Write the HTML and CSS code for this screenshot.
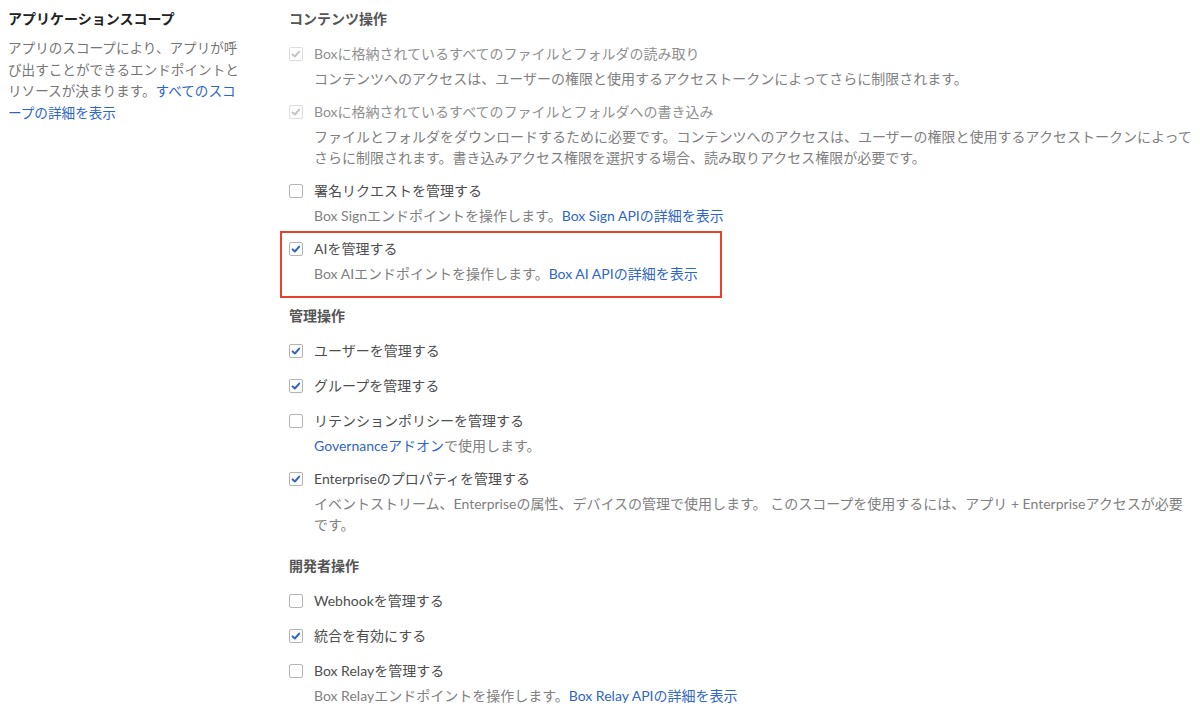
FILE: index.html
```html
<!DOCTYPE html>
<html lang="ja">
<head>
  <meta charset="UTF-8" />
  <title>アプリケーションスコープ</title>
  <link rel="stylesheet" href="styles.css">
</head>
<body>
  <div class="scopes">
    <div class="scopes-intro">
      <h2 class="intro-title">アプリケーションスコープ</h2>
      <p class="intro-text">アプリのスコープにより、アプリが呼び出すことができるエンドポイントとリソースが決まります。<a href="#">すべてのスコープの詳細を表示</a></p>
    </div>

    <div class="scopes-list">
      <!-- コンテンツ操作 -->
      <section class="group">
        <h3 class="group-title">コンテンツ操作</h3>
        <div class="item is-disabled">
          <label class="item-label">
            <span class="box checked">
              <svg viewBox="0 0 12 12"><path d="M2.6 6.4 L4.9 8.5 L9.2 3.6" /></svg>
            </span>
            Boxに格納されているすべてのファイルとフォルダの読み取り
          </label>
          <p class="item-desc">コンテンツへのアクセスは、ユーザーの権限と使用するアクセストークンによってさらに制限されます。</p>
        </div>
        <div class="item is-disabled">
          <label class="item-label">
            <span class="box checked">
              <svg viewBox="0 0 12 12"><path d="M2.6 6.4 L4.9 8.5 L9.2 3.6" /></svg>
            </span>
            Boxに格納されているすべてのファイルとフォルダへの書き込み
          </label>
          <p class="item-desc">ファイルとフォルダをダウンロードするために必要です。コンテンツへのアクセスは、ユーザーの権限と使用するアクセストークンによってさらに制限されます。書き込みアクセス権限を選択する場合、読み取りアクセス権限が必要です。</p>
        </div>
        <div class="item">
          <label class="item-label">
            <span class="box"></span>
            署名リクエストを管理する
          </label>
          <p class="item-desc">Box Signエンドポイントを操作します。<a href="#">Box Sign APIの詳細を表示</a></p>
        </div>
        <div class="item is-highlighted">
          <label class="item-label">
            <span class="box checked">
              <svg viewBox="0 0 12 12"><path d="M2.6 6.4 L4.9 8.5 L9.2 3.6" /></svg>
            </span>
            AIを管理する
          </label>
          <p class="item-desc">Box AIエンドポイントを操作します。<a href="#">Box AI APIの詳細を表示</a></p>
        </div>
      </section>

      <!-- 管理操作 -->
      <section class="group">
        <h3 class="group-title">管理操作</h3>
        <div class="item">
          <label class="item-label">
            <span class="box checked">
              <svg viewBox="0 0 12 12"><path d="M2.6 6.4 L4.9 8.5 L9.2 3.6" /></svg>
            </span>
            ユーザーを管理する
          </label>
        </div>
        <div class="item">
          <label class="item-label">
            <span class="box checked">
              <svg viewBox="0 0 12 12"><path d="M2.6 6.4 L4.9 8.5 L9.2 3.6" /></svg>
            </span>
            グループを管理する
          </label>
        </div>
        <div class="item">
          <label class="item-label">
            <span class="box"></span>
            リテンションポリシーを管理する
          </label>
          <p class="item-desc"><a href="#">Governanceアドオン</a>で使用します。</p>
        </div>
        <div class="item">
          <label class="item-label">
            <span class="box checked">
              <svg viewBox="0 0 12 12"><path d="M2.6 6.4 L4.9 8.5 L9.2 3.6" /></svg>
            </span>
            Enterpriseのプロパティを管理する
          </label>
          <p class="item-desc">イベントストリーム、Enterpriseの属性、デバイスの管理で使用します。 このスコープを使用するには、アプリ + Enterpriseアクセスが必要です。</p>
        </div>
      </section>

      <!-- 開発者操作 -->
      <section class="group">
        <h3 class="group-title">開発者操作</h3>
        <div class="item">
          <label class="item-label">
            <span class="box"></span>
            Webhookを管理する
          </label>
        </div>
        <div class="item">
          <label class="item-label">
            <span class="box checked">
              <svg viewBox="0 0 12 12"><path d="M2.6 6.4 L4.9 8.5 L9.2 3.6" /></svg>
            </span>
            統合を有効にする
          </label>
        </div>
        <div class="item">
          <label class="item-label">
            <span class="box"></span>
            Box Relayを管理する
          </label>
          <p class="item-desc">Box Relayエンドポイントを操作します。<a href="#">Box Relay APIの詳細を表示</a></p>
        </div>
      </section>
    </div>
  </div>
</body>
</html>
```

FILE: styles.css
```css
body {
  margin: 0;
  font-family: Lato, "Noto Sans CJK JP", sans-serif;
  font-size: 14px;
  color: #4e4e4e;
  background-color: #fff;
}
a {
  color: #2f66c6;
  text-decoration: none;
}
.scopes {
  display: grid;
  grid-template-columns: 240px 1fr;
  column-gap: 41px;
  padding: 8px;
}
.intro-title {
  margin: 0 0 9px;
  font-size: 14px;
  line-height: 21px;
  font-weight: bold;
  color: #222;
}
.intro-text {
  margin: 0;
  font-size: 13.6px;
  line-height: 21.5px;
  color: #767676;
}
.scopes-list {
  display: flex;
  flex-direction: column;
  gap: 20px;
}
.group {
  display: flex;
  flex-direction: column;
  gap: 11px;
}
.group-title {
  margin: 0 0 2px;
  font-size: 14px;
  line-height: 21px;
  font-weight: bold;
  color: #555;
}
.item-label {
  display: flex;
  align-items: center;
  gap: 11px;
  line-height: 24px;
  color: #4e4e4e;
  cursor: pointer;
}
.item-desc {
  margin: 2px 0 0;
  padding-left: 25px;
  line-height: 21px;
  color: #808080;
}
.box {
  flex: none;
  width: 14px;
  height: 14px;
  box-sizing: border-box;
  border: 1px solid #b3b3b3;
  border-radius: 2px;
  background-color: #fff;
  display: flex;
}
.box svg {
  width: 12px;
  height: 12px;
  fill: none;
  stroke: #2f66c6;
  stroke-width: 2;
  stroke-linecap: round;
  stroke-linejoin: round;
}
.is-disabled .item-label {
  color: #8f8f8f;
}
.is-disabled .box {
  border-color: #dcdcdc;
}
.is-disabled .box svg {
  stroke: #c4c4c4;
}
.is-highlighted {
  width: 442px;
  box-sizing: border-box;
  margin: -6px 0 -13px -9px;
  padding: 4px 7px 12px 7px;
  border: 2px solid #e8402b;
}
```
